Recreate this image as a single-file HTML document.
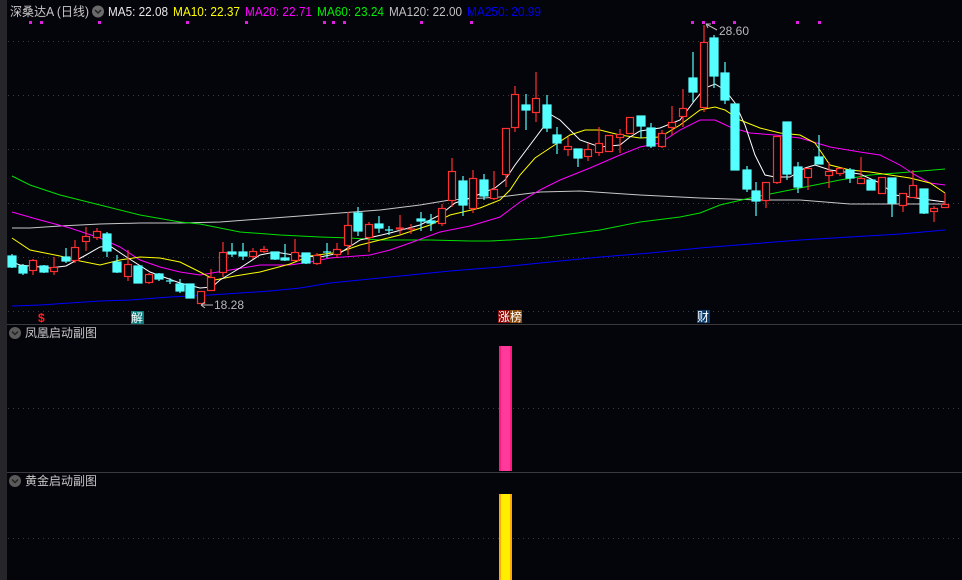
<!DOCTYPE html>
<html><head><meta charset="utf-8"><style>
html,body{margin:0;padding:0;background:#04040b;width:962px;height:580px;overflow:hidden}
svg{display:block}
text{font-family:"Liberation Sans","Noto Sans CJK SC",sans-serif}
</style></head><body>
<svg width="962" height="580" viewBox="0 0 962 580" xmlns="http://www.w3.org/2000/svg">
<rect width="962" height="580" fill="#04040b"/>
<rect x="0" y="0" width="7" height="580" fill="#26262a"/>
<g stroke="#3c3c40" stroke-width="1" stroke-dasharray="1,4">
<line x1="8" y1="41.5" x2="962" y2="41.5"/><line x1="8" y1="95.5" x2="962" y2="95.5"/>
<line x1="8" y1="149.5" x2="962" y2="149.5"/><line x1="8" y1="203.5" x2="962" y2="203.5"/>
<line x1="8" y1="257.5" x2="962" y2="257.5"/><line x1="8" y1="311.5" x2="962" y2="311.5"/>
<line x1="8" y1="408.5" x2="962" y2="408.5"/><line x1="8" y1="538.5" x2="962" y2="538.5"/>
</g>
<line x1="7" y1="324.5" x2="962" y2="324.5" stroke="#3a3a3e"/>
<line x1="7" y1="472.5" x2="962" y2="472.5" stroke="#3a3a3e"/>

<!-- header -->
<text x="10" y="16" font-size="12.5" fill="#c8c8c8" textLength="79" lengthAdjust="spacingAndGlyphs">深桑达A (日线)</text>
<circle cx="98" cy="11.5" r="6" fill="#6a6a6a"/><path d="M95 10 L98 13 L101 10" stroke="#222" stroke-width="1.5" fill="none"/>
<text x="108" y="16" font-size="12.5" fill="#e8e8e8" textLength="60" lengthAdjust="spacingAndGlyphs">MA5: 22.08</text>
<text x="173" y="16" font-size="12.5" fill="#ffff00" textLength="67" lengthAdjust="spacingAndGlyphs">MA10: 22.37</text>
<text x="245" y="16" font-size="12.5" fill="#ff00ff" textLength="67" lengthAdjust="spacingAndGlyphs">MA20: 22.71</text>
<text x="317" y="16" font-size="12.5" fill="#00ee00" textLength="67" lengthAdjust="spacingAndGlyphs">MA60: 23.24</text>
<text x="389" y="16" font-size="12.5" fill="#c0c0c0" textLength="73" lengthAdjust="spacingAndGlyphs">MA120: 22.00</text>
<text x="467" y="16" font-size="12.5" fill="#0000ee" textLength="74" lengthAdjust="spacingAndGlyphs">MA250: 20.99</text>
<g fill="#e020e0">
<rect x="29" y="21" width="3" height="3"/><rect x="40" y="21" width="3" height="3"/><rect x="98" y="21" width="3" height="3"/><rect x="186" y="21" width="3" height="3"/><rect x="245" y="21" width="3" height="3"/><rect x="323" y="21" width="3" height="3"/><rect x="332" y="21" width="3" height="3"/><rect x="343" y="21" width="3" height="3"/><rect x="420" y="21" width="3" height="3"/><rect x="470" y="21" width="3" height="3"/><rect x="691" y="21" width="3" height="3"/><rect x="702" y="21" width="3" height="3"/><rect x="712" y="21" width="3" height="3"/><rect x="733" y="21" width="3" height="3"/><rect x="796" y="21" width="3" height="3"/><rect x="818" y="21" width="3" height="3"/>
</g>

<!-- MA lines -->
<g fill="none" stroke-width="1">
<polyline stroke="#0000ff" points="12,306 40,305 70,303 100,301 130,300 170,297 210,295 240,293 270,291 300,288 330,283 360,280 400,276 450,271 500,267 550,262 600,257 650,253 700,248 750,244 800,240 850,237 900,234 945,230"/>
<polyline stroke="#c8c8c8" points="12,228 30,228 60,226 100,224 140,223 180,223 220,222 260,219 300,216 340,213 380,210 420,205 450,200 500,197 540,192 580,191 640,195 700,198 730,199 760,200 800,200 850,204 900,204 945,204"/>
<polyline stroke="#00e000" points="12,176 30,185 60,195 100,205 140,215 180,222 200,224 240,232 280,235 320,237 350,238 380,240 430,240 470,241 490,241 510,240 540,238 570,234 600,230 640,222 680,217 700,213 720,205 750,198 780,192 810,186 840,180 870,175 910,172 945,169"/>
<polyline stroke="#ff00ff" points="12,212 40,220 70,228 100,238 120,247 140,260 160,267 180,272 200,275 230,270 260,265 290,265 310,262 330,258 370,255 390,250 410,243 440,232 470,226 500,217 520,202 540,190 560,180 590,168 620,155 640,147 660,143 680,130 700,120 715,120 730,127 750,133 775,135 800,138 830,147 860,152 880,155 900,165 915,175 930,183 945,185"/>
<polyline stroke="#ffff00" points="12,238 30,250 60,256 80,261 100,265 120,260 140,257 160,258 180,262 200,272 215,280 235,276 260,272 290,264 310,256 340,252 360,245 380,240 400,235 430,225 450,215 480,208 500,200 510,190 520,175 535,158 550,148 570,135 585,130 600,130 620,135 640,138 660,137 680,125 700,110 715,107 725,110 740,120 760,128 780,133 800,135 815,143 830,165 850,170 870,172 890,175 910,178 930,183 945,193"/>
<polyline stroke="#ffffff" points="12,262 20,265 50,268 66,266 86,255 100,247 110,246 128,258 150,272 180,283 200,288 212,287 220,280 240,268 260,255 275,252 300,256 320,257 340,253 360,240 390,233 420,225 440,215 455,203 470,198 495,188 505,180 515,165 530,145 545,125 548,113 560,120 580,140 600,147 620,145 630,137 640,131 660,128 680,120 695,100 705,88 715,84 725,90 735,103 745,125 755,155 765,175 775,177 790,177 805,168 815,165 830,170 845,172 860,174 880,183 895,195 910,197 930,200 945,202"/>
</g>

<!-- candles -->
<g stroke-width="1.2">
<g stroke="#5ff" fill="#5ff">
<line x1="12" y1="254" x2="12" y2="268"/><rect x="8" y="256" width="8" height="11"/>
<line x1="23" y1="264" x2="23" y2="275"/><rect x="19" y="266" width="8" height="7"/>
<line x1="44" y1="265" x2="44" y2="273"/><rect x="40" y="266" width="8" height="6"/>
<line x1="66" y1="248" x2="66" y2="263"/><rect x="62" y="257" width="8" height="4"/>
<line x1="107" y1="232" x2="107" y2="257"/><rect x="103" y="234" width="8" height="17"/>
<line x1="117" y1="255" x2="117" y2="273"/><rect x="113" y="262" width="8" height="10"/>
<line x1="138" y1="266" x2="138" y2="283"/><rect x="134" y="266" width="8" height="17"/>
<line x1="159" y1="273" x2="159" y2="281"/><rect x="155" y="274" width="8" height="5"/>
<line x1="170" y1="278" x2="170" y2="284"/><line x1="166" y1="281" x2="174" y2="281"/>
<line x1="180" y1="279" x2="180" y2="293"/><rect x="176" y="284" width="8" height="7"/>
<line x1="190" y1="284" x2="190" y2="298"/><rect x="186" y="284" width="8" height="14"/>
<line x1="232" y1="243" x2="232" y2="257"/><rect x="228" y="252" width="8" height="2"/>
<line x1="243" y1="243" x2="243" y2="260"/><rect x="239" y="252" width="8" height="4"/>
<line x1="275" y1="252" x2="275" y2="260"/><rect x="271" y="252" width="8" height="7"/>
<line x1="285" y1="244" x2="285" y2="261"/><rect x="281" y="258" width="8" height="2"/>
<line x1="306" y1="253" x2="306" y2="264"/><rect x="302" y="253" width="8" height="10"/>
<line x1="327" y1="243" x2="327" y2="258"/><line x1="323" y1="252" x2="331" y2="252"/>
<line x1="358" y1="207" x2="358" y2="236"/><rect x="354" y="213" width="8" height="18"/>
<line x1="379" y1="216" x2="379" y2="233"/><rect x="375" y="224" width="8" height="4"/>
<line x1="389" y1="226" x2="389" y2="235"/><line x1="385" y1="230" x2="393" y2="230"/>
<line x1="421" y1="212" x2="421" y2="231"/><rect x="417" y="219" width="8" height="2"/>
<line x1="431" y1="214" x2="431" y2="231"/><rect x="427" y="221" width="8" height="2"/>
<line x1="463" y1="176" x2="463" y2="216"/><rect x="459" y="181" width="8" height="24"/>
<line x1="484" y1="174" x2="484" y2="200"/><rect x="480" y="180" width="8" height="16"/>
<line x1="526" y1="94" x2="526" y2="130"/><rect x="522" y="105" width="8" height="5"/>
<line x1="547" y1="95" x2="547" y2="132"/><rect x="543" y="105" width="8" height="23"/>
<line x1="557" y1="127" x2="557" y2="154"/><rect x="553" y="135" width="8" height="8"/>
<line x1="578" y1="149" x2="578" y2="167"/><rect x="574" y="149" width="8" height="9"/>
<line x1="641" y1="116" x2="641" y2="138"/><rect x="637" y="116" width="8" height="10"/>
<line x1="651" y1="123" x2="651" y2="148"/><rect x="647" y="128" width="8" height="18"/>
<line x1="693" y1="52" x2="693" y2="102"/><rect x="689" y="78" width="8" height="14"/>
<line x1="714" y1="35" x2="714" y2="88"/><rect x="710" y="38" width="8" height="38"/>
<line x1="725" y1="62" x2="725" y2="104"/><rect x="721" y="73" width="8" height="27"/>
<rect x="731" y="104" width="8" height="66"/>
<line x1="747" y1="166" x2="747" y2="192"/><rect x="743" y="170" width="8" height="19"/>
<line x1="756" y1="182" x2="756" y2="216"/><rect x="752" y="191" width="8" height="10"/>
<line x1="787" y1="122" x2="787" y2="180"/><rect x="783" y="122" width="8" height="52"/>
<line x1="798" y1="162" x2="798" y2="193"/><rect x="794" y="167" width="8" height="20"/>
<line x1="819" y1="135" x2="819" y2="164"/><rect x="815" y="157" width="8" height="7"/>
<line x1="850" y1="168" x2="850" y2="183"/><rect x="846" y="170" width="8" height="8"/>
<line x1="871" y1="180" x2="871" y2="190"/><rect x="867" y="180" width="8" height="10"/>
<line x1="892" y1="178" x2="892" y2="217"/><rect x="888" y="178" width="8" height="25"/>
<line x1="924" y1="189" x2="924" y2="214"/><rect x="920" y="189" width="8" height="24"/>
</g>
<g stroke="#ff3030" fill="#04040b">
<line x1="33" y1="259" x2="33" y2="275"/><rect x="29.5" y="260.5" width="7" height="10"/>
<line x1="54" y1="257" x2="54" y2="275"/><rect x="50.5" y="267.5" width="7" height="4"/>
<line x1="75" y1="240" x2="75" y2="263"/><rect x="71.5" y="247.5" width="7" height="13"/>
<line x1="86" y1="227" x2="86" y2="251"/><rect x="82.5" y="236.5" width="7" height="5"/>
<line x1="97" y1="228" x2="97" y2="240"/><rect x="93.5" y="231.5" width="7" height="6"/>
<line x1="128" y1="250" x2="128" y2="281"/><rect x="124.5" y="264.5" width="7" height="12"/>
<line x1="149" y1="273" x2="149" y2="284"/><rect x="145.5" y="274.5" width="7" height="8"/>
<line x1="201" y1="291" x2="201" y2="304"/><rect x="197.5" y="291.5" width="7" height="12"/>
<line x1="211" y1="269" x2="211" y2="291"/><rect x="207.5" y="277.5" width="7" height="13"/>
<line x1="223" y1="242" x2="223" y2="277"/><rect x="219.5" y="252.5" width="7" height="20"/>
<line x1="253" y1="248" x2="253" y2="259"/><rect x="249.5" y="251.5" width="7" height="5"/>
<line x1="264" y1="246" x2="264" y2="253"/><rect x="260.5" y="249.5" width="7" height="2"/>
<line x1="295" y1="239" x2="295" y2="261"/><rect x="291.5" y="252.5" width="7" height="8"/>
<line x1="317" y1="253" x2="317" y2="265"/><rect x="313.5" y="255.5" width="7" height="8"/>
<line x1="337" y1="243" x2="337" y2="258"/><rect x="333.5" y="249.5" width="7" height="5"/>
<line x1="348" y1="212" x2="348" y2="255"/><rect x="344.5" y="225.5" width="7" height="20"/>
<line x1="369" y1="222" x2="369" y2="252"/><rect x="365.5" y="224.5" width="7" height="13"/>
<line x1="400" y1="215" x2="400" y2="234"/><rect x="396.5" y="228" width="7" height="1"/>
<line x1="411" y1="224" x2="411" y2="234"/><line x1="407" y1="229" x2="415" y2="229"/>
<line x1="442" y1="204" x2="442" y2="226"/><rect x="438.5" y="208.5" width="7" height="15"/>
<line x1="452" y1="158" x2="452" y2="207"/><rect x="448.5" y="171.5" width="7" height="29"/>
<line x1="473" y1="170" x2="473" y2="213"/><rect x="469.5" y="178.5" width="7" height="30"/>
<line x1="494" y1="171" x2="494" y2="200"/><rect x="490.5" y="189.5" width="7" height="9"/>
<line x1="506" y1="128" x2="506" y2="187"/><rect x="502.5" y="128.5" width="7" height="46"/>
<line x1="515" y1="86" x2="515" y2="132"/><rect x="511.5" y="94.5" width="7" height="33"/>
<line x1="536" y1="72" x2="536" y2="122"/><rect x="532.5" y="98.5" width="7" height="14"/>
<line x1="568" y1="137" x2="568" y2="156"/><rect x="564.5" y="146.5" width="7" height="3"/>
<line x1="588" y1="143" x2="588" y2="161"/><rect x="584.5" y="149.5" width="7" height="7"/>
<line x1="599" y1="127" x2="599" y2="156"/><rect x="595.5" y="143.5" width="7" height="9"/>
<rect x="605.5" y="135.5" width="7" height="16"/>
<line x1="620" y1="129" x2="620" y2="153"/><rect x="616.5" y="134.5" width="7" height="3"/>
<rect x="626.5" y="117.5" width="7" height="16"/>
<line x1="662" y1="130" x2="662" y2="148"/><rect x="658.5" y="133.5" width="7" height="13"/>
<line x1="672" y1="106" x2="672" y2="135"/><rect x="668.5" y="122.5" width="7" height="5"/>
<line x1="683" y1="89" x2="683" y2="127"/><rect x="679.5" y="108.5" width="7" height="8"/>
<line x1="704" y1="25" x2="704" y2="112"/><rect x="700.5" y="42.5" width="7" height="65"/>
<line x1="766" y1="182" x2="766" y2="208"/><rect x="762.5" y="182.5" width="7" height="18"/>
<line x1="777" y1="136" x2="777" y2="184"/><rect x="773.5" y="136.5" width="7" height="46"/>
<line x1="808" y1="168" x2="808" y2="190"/><rect x="804.5" y="168.5" width="7" height="9"/>
<line x1="829" y1="162" x2="829" y2="188"/><rect x="825.5" y="171.5" width="7" height="4"/>
<line x1="840" y1="168" x2="840" y2="176"/><rect x="836.5" y="168.5" width="7" height="5"/>
<line x1="861" y1="157" x2="861" y2="184"/><rect x="857.5" y="178.5" width="7" height="5"/>
<line x1="882" y1="177" x2="882" y2="194"/><rect x="878.5" y="177.5" width="7" height="16"/>
<line x1="903" y1="193" x2="903" y2="212"/><rect x="899.5" y="193.5" width="7" height="12"/>
<line x1="913" y1="170" x2="913" y2="198"/><rect x="909.5" y="185.5" width="7" height="12"/>
<line x1="934" y1="206" x2="934" y2="222"/><rect x="930.5" y="208.5" width="7" height="3"/>
<line x1="945" y1="193" x2="945" y2="207"/><rect x="941.5" y="204.5" width="7" height="3"/>
</g>
</g>

<!-- annotations -->
<g stroke="#bbb" fill="none" stroke-width="1"><path d="M201 305 L213 305 M201 305 L205 302 M201 305 L205 308"/><path d="M706 24 L717 30 M706 24 L711 24 M706 24 L708 28"/></g>
<text x="214" y="309" font-size="12" fill="#b8b8b8">18.28</text>
<text x="719" y="35" font-size="12" fill="#b8b8b8">28.60</text>

<!-- markers -->
<text x="38" y="322" font-size="12" font-weight="bold" fill="#ff2020">$</text>
<rect x="131" y="311" width="13" height="13" fill="#0a7a7a"/><text x="131" y="322" font-size="12" fill="#fff">解</text>
<rect x="498" y="310" width="12" height="13" fill="#8a0a0a"/><text x="498" y="321" font-size="12" fill="#fff">涨</text>
<rect x="510" y="310" width="12" height="13" fill="#8a4a0a"/><text x="510" y="321" font-size="12" fill="#fff">榜</text>
<rect x="697" y="310" width="13" height="13" fill="#0a3a6a"/><text x="697" y="321" font-size="12" fill="#fff">财</text>

<!-- sub panels -->
<circle cx="15" cy="333" r="6" fill="#5a5a5a"/><path d="M12 331.5 L15 334.5 L18 331.5" stroke="#222" stroke-width="1.5" fill="none"/>
<text x="25" y="337" font-size="12" fill="#c8c8c8">凤凰启动副图</text>
<rect x="499" y="346" width="13" height="125" fill="#ff3a9a"/><rect x="499" y="346" width="2" height="125" fill="#ff1a80"/><rect x="510" y="346" width="2" height="125" fill="#ff1a80"/>
<circle cx="15" cy="481" r="6" fill="#5a5a5a"/><path d="M12 479.5 L15 482.5 L18 479.5" stroke="#222" stroke-width="1.5" fill="none"/>
<text x="25" y="485" font-size="12" fill="#c8c8c8">黄金启动副图</text>
<rect x="499" y="494" width="13" height="86" fill="#ffee00"/><rect x="499" y="494" width="2" height="86" fill="#ffaa00"/><rect x="510" y="494" width="2" height="86" fill="#ffaa00"/>
</svg>
</body></html>
